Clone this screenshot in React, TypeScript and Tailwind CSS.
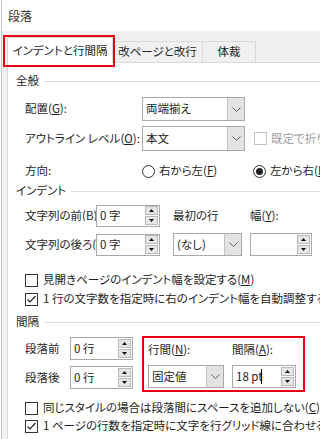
import React from "react";

const FONT = "font-['Meiryo_UI','Noto_Sans_CJK_JP',sans-serif] [font-feature-settings:'palt']";

function Chevron() {
  return (
    <svg width="9" height="5" viewBox="0 0 9 5">
      <polyline points="0.5,0.5 4.5,4.5 8.5,0.5" fill="none" stroke="#606060" strokeWidth="1" />
    </svg>
  );
}

function Dropdown({ className, text }: { className: string; text: React.ReactNode }) {
  return (
    <div className={`flex shrink-0 border border-[#a9a9a9] bg-white ${className}`}>
      <div className="flex flex-1 items-center overflow-hidden pl-[3px] whitespace-nowrap">{text}</div>
      <div className="flex w-[17px] items-center justify-center border-l border-[#c4c4c4] bg-[#e3e3e3]">
        <Chevron />
      </div>
    </div>
  );
}

function SpinBtn({ up }: { up: boolean }) {
  return (
    <div className="flex h-[9px] items-center justify-center border border-[#b9b9b9] bg-[#e6e6e6]">
      <svg width="5" height="3" viewBox="0 0 5 3">
        {up ? <polygon points="2.5,0 5,3 0,3" fill="#111" /> : <polygon points="0,0 5,0 2.5,3" fill="#111" />}
      </svg>
    </div>
  );
}

function Spin({ className, text }: { className: string; text: React.ReactNode }) {
  return (
    <div className={`flex shrink-0 border border-[#a9a9a9] bg-white ${className}`}>
      <div className="flex flex-1 items-center pl-[3px] whitespace-nowrap">{text}</div>
      <div className="flex w-[14px] flex-col justify-center gap-[1px] pr-[1px]">
        <SpinBtn up />
        <SpinBtn up={false} />
      </div>
    </div>
  );
}

function CheckBox({ checked, disabled }: { checked?: boolean; disabled?: boolean }) {
  return (
    <div
      className={`flex h-[13px] w-[13px] shrink-0 items-center justify-center border bg-white ${
        disabled ? "border-[#c4c4c4]" : "border-[#333333]"
      }`}
    >
      {checked && (
        <svg width="11" height="11" viewBox="0 0 11 11">
          <polyline points="1.5,5.5 4,8 9.5,2" fill="none" stroke="#222" strokeWidth="1.2" />
        </svg>
      )}
    </div>
  );
}

function Radio({ checked }: { checked?: boolean }) {
  return (
    <div className="flex h-[13px] w-[13px] shrink-0 items-center justify-center rounded-full border border-[#333333] bg-white">
      {checked && <div className="h-[7px] w-[7px] rounded-full bg-[#222]" />}
    </div>
  );
}

function Heading({ text }: { text: string }) {
  return (
    <div className="flex h-[16px] items-center pl-[8px]">
      <span className="whitespace-nowrap">{text}</span>
      <div className="ml-[5px] h-px flex-1 bg-[#dcdcdc]" />
    </div>
  );
}

function CheckRow({ checked, children }: { checked?: boolean; children: React.ReactNode }) {
  return (
    <div className="flex h-[18px] items-center gap-[5px] pl-[17px] whitespace-nowrap">
      <CheckBox checked={checked} />
      <span>{children}</span>
    </div>
  );
}

export default function App() {
  return (
    <div className={`h-[439px] w-[320px] overflow-hidden bg-white pl-[1px] text-[11.5px] leading-none text-[#1e1e1e] ${FONT}`}>
      <div className="relative flex h-full flex-col border-l border-[#c8c8c8] bg-[#f0f0f0]">
        {/* title bar */}
        <div className="flex h-[31px] items-center bg-white pl-[6px] text-[12px] text-[#333]">段落</div>

        {/* tabs */}
        <div className="flex h-[31px] items-end pl-[5px]">
          <div className="z-10 -mb-px flex h-[26px] w-[106px] shrink-0 items-center justify-center border border-b-0 border-[#d9d9d9] bg-white">
            インデントと行間隔
          </div>
          <div className="flex h-[21px] w-[90px] shrink-0 items-center justify-center border-t border-r border-[#d9d9d9]">
            改ページと改行
          </div>
          <div className="flex h-[21px] w-[53px] shrink-0 items-center justify-center border-t border-r border-[#d9d9d9]">
            体裁
          </div>
        </div>

        {/* panel */}
        <div className="ml-[5px] flex flex-1 flex-col border-t border-l border-[#d9d9d9] bg-white">
          <div className="mt-[10px]">
            <Heading text="全般" />
          </div>

          <div className="mt-[8px] flex h-[24px] items-center pl-[17px]">
            <div className="w-[117px] shrink-0">
              配置(<u>G</u>):
            </div>
            <Dropdown className="h-[24px] w-[103px]" text="両端揃え" />
          </div>

          <div className="mt-[5px] flex h-[25px] items-center pl-[17px]">
            <div className="w-[117px] shrink-0 whitespace-nowrap">
              アウトライン レベル(<u>O</u>):
            </div>
            <Dropdown className="h-[25px] w-[103px]" text="本文" />
            <div className="ml-[9px] flex shrink-0 items-center gap-[4px] whitespace-nowrap text-[#a0a0a0]">
              <CheckBox disabled />
              <span>既定で折りたたみ(E)</span>
            </div>
          </div>

          <div className="mt-[10px] flex h-[20px] items-center pl-[17px]">
            <div className="w-[117px] shrink-0">方向:</div>
            <div className="flex w-[111px] shrink-0 items-center gap-[4px] whitespace-nowrap">
              <Radio />
              <span>
                右から左(<u>F</u>)
              </span>
            </div>
            <div className="flex shrink-0 items-center gap-[4px] whitespace-nowrap">
              <Radio checked />
              <span>
                左から右(<u>L</u>)
              </span>
            </div>
          </div>

          <div className="mt-[2px]">
            <Heading text="インデント" />
          </div>

          <div className="mt-[5px] flex h-[23px] items-center pl-[17px]">
            <div className="w-[71px] shrink-0 overflow-hidden whitespace-nowrap">文字列の前(B):</div>
            <Spin className="h-[22px] w-[64px]" text="0 字" />
            <div className="ml-[13px] w-[77px] shrink-0 whitespace-nowrap">最初の行</div>
            <div className="shrink-0 whitespace-nowrap">
              幅(<u>Y</u>):
            </div>
          </div>

          <div className="mt-[6px] flex h-[23px] items-center pl-[17px]">
            <div className="w-[71px] shrink-0 overflow-hidden whitespace-nowrap">文字列の後ろ(X):</div>
            <Spin className="h-[22px] w-[64px]" text="0 字" />
            <Dropdown className="ml-[13px] h-[23px] w-[69px]" text="(なし)" />
            <Spin className="ml-[8px] h-[23px] w-[62px]" text="" />
          </div>

          <div className="mt-[15px]">
            <CheckRow>
              見開きページのインデント幅を設定する(<u>M</u>)
            </CheckRow>
          </div>
          <div className="mt-[1px]">
            <CheckRow checked>1 行の文字数を指定時に右のインデント幅を自動調整する(D)</CheckRow>
          </div>

          <div className="mt-[6px]">
            <Heading text="間隔" />
          </div>

          <div className="mt-[6px] flex h-[56px] pl-[17px]">
            <div className="flex shrink-0 flex-col pt-px">
              <div className="flex h-[23px] items-center">
                <div className="w-[45px] shrink-0 whitespace-nowrap">段落前</div>
                <Spin className="h-[23px] w-[63px]" text="0 行" />
              </div>
              <div className="mt-[6px] flex h-[23px] items-center">
                <div className="w-[45px] shrink-0 whitespace-nowrap">段落後</div>
                <Spin className="h-[23px] w-[63px]" text="0 行" />
              </div>
            </div>

            <div className="ml-[9px] flex h-[56px] w-[163px] shrink-0 flex-col border-2 border-[#e60012] pt-[3px] pl-[4px]">
              <div className="flex h-[18px] items-center">
                <div className="w-[84px] shrink-0 whitespace-nowrap">
                  行間(<u>N</u>):
                </div>
                <div className="whitespace-nowrap">
                  間隔(<u>A</u>):
                </div>
              </div>
              <div className="mt-[6px] flex h-[23px] items-center">
                <Dropdown className="h-[23px] w-[76px]" text="固定値" />
                <Spin
                  className="ml-[8px] h-[23px] w-[64px]"
                  text={
                    <span className="flex items-center">
                      18 pt<span className="-ml-[2px] h-[15px] w-px bg-black" />
                    </span>
                  }
                />
              </div>
            </div>
          </div>

          <div className="mt-[7px]">
            <CheckRow>
              同じスタイルの場合は段落間にスペースを追加しない(<u>C</u>)
            </CheckRow>
          </div>
          <CheckRow checked>
            1 ページの行数を指定時に文字を行グリッド線に合わせる(<u>W</u>)
          </CheckRow>
        </div>

        {/* red annotation around selected tab */}
        <div className="pointer-events-none absolute top-[35px] left-[1px] z-20 h-[32px] w-[112px] border-2 border-[#e60012]" />
      </div>
    </div>
  );
}
